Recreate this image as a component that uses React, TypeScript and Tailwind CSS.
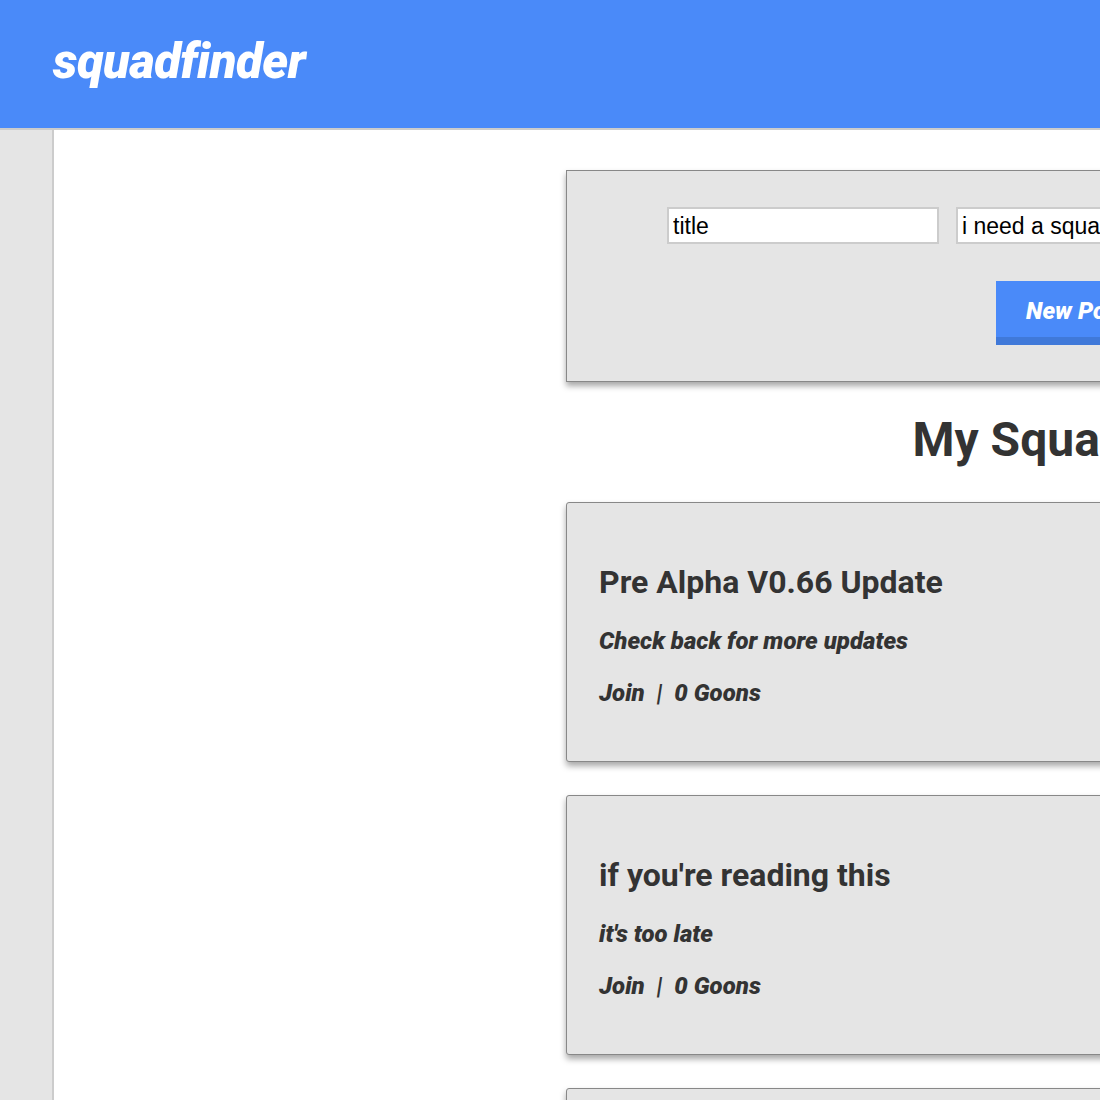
import React from 'react';

const squads = [
  { title: 'Pre Alpha V0.66 Update', desc: 'Check back for more updates', goons: 0 },
  { title: "if you're reading this", desc: "it's too late", goons: 0 },
  { title: 'looking for squad', desc: 'anyone', goons: 0 },
];

function SquadCard({ title, desc, goons }: { title: string; desc: string; goons: number }) {
  return (
    <div className="mb-[33px] h-[260px] w-[924px] rounded-[3px] border border-[#888] bg-[#e5e5e5] pl-[32px] pt-[60px] shadow-[0_4px_6px_rgba(0,0,0,0.35)]">
      <h3 className="text-[32px] font-bold leading-[38px] text-[#333]">{title}</h3>
      <p className="mt-[27px] text-[24px] font-black italic leading-[26px] text-[#333]">{desc}</p>
      <p className="mt-[26px] text-[24px] font-black italic leading-[26px] text-[#333]">
        Join&nbsp;&nbsp;|&nbsp;&nbsp;{goons} Goons
      </p>
    </div>
  );
}

export default function App() {
  return (
    <div className="h-[1100px] w-[1100px] overflow-hidden bg-[#e5e5e5] font-['Roboto',sans-serif]">
      <header className="flex h-[130px] items-start border-b-2 border-[#ccc] bg-[#4a8af9] pl-[53px] pt-[34px]">
        <h1 className="text-[49px] font-black italic leading-[56px] tracking-[-0.5px] text-white">squadfinder</h1>
      </header>
      <div className="flex">
        <div className="w-[52px] shrink-0 bg-[#e5e5e5]" />
        <main className="h-[970px] flex-1 border-l-2 border-[#ccc] bg-white pl-[512px] pt-[40px]">
          <div className="w-[924px]">
            <div className="h-[212px] w-[924px] border border-[#888] bg-[#e5e5e5] pt-[36px] shadow-[0_4px_6px_rgba(0,0,0,0.35)]">
              <div className="flex gap-[17px] pl-[100px]">
                <input
                  defaultValue="title"
                  className="h-[37px] w-[272px] border-2 border-[#ccc] bg-white px-[4px] pt-[2px] font-['Liberation_Sans',sans-serif] text-[23px] text-black outline-none"
                />
                <input
                  defaultValue="i need a squad"
                  className="h-[37px] w-[272px] border-2 border-[#ccc] bg-white px-[4px] pt-[2px] font-['Liberation_Sans',sans-serif] text-[23px] text-black outline-none"
                />
              </div>
              <div className="mt-[37px] pl-[429px]">
                <button className="h-[64px] w-[160px] border-b-[8px] border-[#4079d9] bg-[#4a8af9] pt-[4px] text-[24px] font-black italic text-white">
                  New Post
                </button>
              </div>
            </div>
            <h2 className="mt-[30px] mb-[34px] pl-[8px] text-center text-[48px] font-bold leading-[56px] text-[#333]">My Squads</h2>
            {squads.map((s, i) => (
              <SquadCard key={i} {...s} />
            ))}
          </div>
        </main>
      </div>
    </div>
  );
}
